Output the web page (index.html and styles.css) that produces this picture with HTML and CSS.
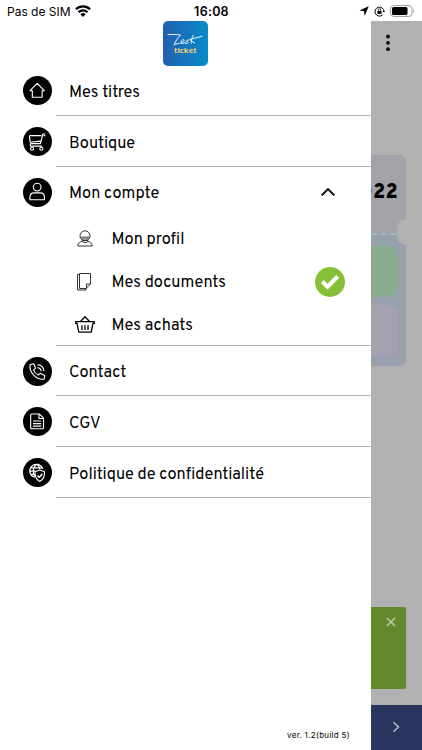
FILE: index.html
```html
<!DOCTYPE html>
<html lang="fr">
<head>
<meta charset="utf-8">
<meta name="viewport" content="width=device-width">
<title>Zest ticket</title>
<link rel="stylesheet" href="styles.css">
</head>
<body>
<header class="status">
  <div class="carrier"><span>Pas de SIM</span>
    <svg width="16" height="12" viewBox="0 0 16 12" fill="none" stroke="#000" stroke-width="2.3"><path d="M1 4.300a10 10 0 0 1 14 0M3.500 7.200a6.300 6.300 0 0 1 9 0"/><path d="M5.400 9.300a3.800 3.800 0 0 1 5.200 0L8 12z" fill="#000" stroke="none"/></svg>
  </div>
  <time>16:08</time>
  <div class="indicators">
    <svg width="10" height="10" viewBox="0 0 10 10"><path d="M9.800.2 5.600 9.700 4.900 5.100.3 4.400z"/></svg>
    <svg width="11" height="11" viewBox="0 0 11 11"><path d="M8.600 8.900A4.500 4.500 0 1 1 10 5.500" fill="none" stroke="#000"/><path d="m8.500 5 2.400 0-1 1.800zM3.500 4.900h4v3h-4z"/><path d="M4.300 5V3.800a1.200 1.200 0 0 1 2.400 0V5" fill="none" stroke="#000" stroke-width=".8"/></svg>
    <svg width="26" height="12" viewBox="0 0 26 12"><rect x=".6" y=".6" width="21.4" height="10.8" rx="3" fill="none" stroke="#999"/><rect x="2" y="2" width="15.500" height="8" rx="1.600"/><path d="M23.300 4.200c1.300.5 1.300 3.100 0 3.600z" fill="#999"/></svg>
  </div>
</header>
<div class="screen">
  <aside class="drawer">
    <div class="logo">
      <svg width="45" height="45" viewBox="0 0 45 45">
        <defs><linearGradient id="blue"><stop stop-color="#2360ae"/><stop offset="1" stop-color="#078bcb"/></linearGradient></defs>
        <rect width="45" height="45" rx="5" fill="url(#blue)"/>
        <path d="M5 13.500c4-.2 9 .1 12.500.4-3 3.200-5 6.600-6.500 10 2-1.400 3.800-1.500 5.500-1.200m1.600-1.300c2-.2 3.400-1.400 3-2.400-.7-1.200-3.200.5-3.300 2.300-.1 2 2.400 1.600 4.500 0 1.400-1 2.300-2.500 3.200-2.300-2 .2-2 1.500-1 2.200 1 .9-.4 1.800-1.900 1.300m5.800 0c-1-.3-.1-3.600 1.800-8.200m-3.400 4.300c4-1.200 8.300-2.600 12.200-3.300m-11.200 4.400 4 2.400" fill="none" stroke="#fff" stroke-width=".9" stroke-linecap="round"/>
        <text x="11" y="31.500" textLength="22.500" class="logo-word">ticket</text>
      </svg>
    </div>
    <nav>
      <a class="row"><span class="disc"><svg viewBox="0 0 28 28"><path d="m6.800 14.200 6.900-7 6.900 7H18.500v6.300H9v-6.300z"/></svg></span><span class="label">Mes titres</span></a>
      <a class="row"><span class="disc"><svg viewBox="0 0 28 28"><path d="M21.500 6.800h-2.300L16.800 16H7.700M6.200 8.300h11.500M6.200 8.300l.7 6.400 10-1M7.700 16c-1.200.5-.8 2.400.5 2.400h10.300M21.500 8.300h-1.700"/><circle cx="8.700" cy="21" r="1.500"/><circle cx="17.700" cy="21" r="1.500"/></svg></span><span class="label">Boutique</span></a>
      <a class="row row-open"><span class="disc"><svg viewBox="0 0 28 28"><circle cx="13.700" cy="8.800" r="3.700"/><path d="M6.700 21v-2.300c0-2.600 1.600-4.400 4-4.400h6c2.400 0 4 1.800 4 4.400V21z"/></svg></span><span class="label">Mon compte</span>
        <svg class="chevron" width="16" height="10" viewBox="0 0 16 10"><path d="m1.700 8.300 6.300-6.300 6.300 6.300" fill="none" stroke="#000" stroke-width="1.900"/></svg></a>
      <div class="sub">
        <a class="subrow"><svg class="thin" width="20" height="20" viewBox="0 0 20 20"><circle cx="10" cy="6.800" r="5"/><path d="M5.500 8.200h9M6.500 10h7M6.800 11.500h6.400M2.800 17c.2-2.800 2-4 4.200-4.700 1.500 1.800 4.500 1.800 6 0 2.200.7 4 1.900 4.200 4.700z"/></svg><span class="label">Mon profil</span></a>
        <a class="subrow"><svg class="thin" width="20" height="20" viewBox="0 0 20 20"><path d="M4.500 1.500H15.500V12l-4.500 4.500H4.500zM11.500 16.500V12h4M4.500 2.500h-2v15.500h8.500v-2"/></svg><span class="label">Mes documents</span>
          <svg class="check" width="30" height="30" viewBox="0 0 30 30"><circle cx="15" cy="15" r="15" fill="#87bf39"/><path d="m7.300 14.500 5.200 5.200L22.700 9.500" fill="none" stroke="#fff" stroke-width="4.200"/></svg></a>
        <a class="subrow"><svg class="basket" width="20" height="20" viewBox="0 0 20 20"><path d="M.8 6.700h18.400v1.600h-1.200L16.200 17.200H3.800L2 8.300H.8zM5.500 6.500 10 1.700l4.500 4.800M7 10.200V15m3-4.800V15m3-4.800V15"/></svg><span class="label">Mes achats</span></a>
      </div>
      <a class="row row-short"><span class="disc"><svg viewBox="0 0 28 28"><path d="M7 7.200 10.400 6.500 12.100 10.700 10.200 12.700c.8 2.200 2.400 3.900 4.600 4.700l2-1.600 4.200 2.200-.5 3.300c-3.400.6-7.500-1.100-10.200-3.900S6.200 10.500 7 7.200zM14 10.200c2 .2 3.300 1.500 3.600 3.600M14 7.300c3.800.4 6 2.700 6.300 6.500"/></svg></span><span class="label">Contact</span></a>
      <a class="row"><span class="disc"><svg viewBox="0 0 28 28"><path d="M8.600 6.800h7.300l3.900 4V20q0 1-1 1H8.600q-1.200 0-1.200-1V7.800q0-1 1.200-1zM15.400 6.800v4.300h4.400M9.600 13.500h8m-8 2.500h8m-8 2.500h8"/></svg></span><span class="label">CGV</span></a>
      <a class="row"><span class="disc"><svg viewBox="0 0 28 28"><path d="M19 10.500A6.400 6.400 0 1 0 11.200 18.600M13.100 6c-4 3-4 9-1.500 12M13.100 6c2 1.300 3 3 3.200 4.800M7.700 9.500h10.500M6.700 12.700h5.500M7.700 15.800h4"/><path d="m16.200 11.600 4.500 1.600c.3 4.500-.9 7.600-4.500 9.400-3.600-1.800-4.800-4.900-4.500-9.400z" fill="#000"/><path d="m14 17 1.700 1.600 3-3.200" stroke-width="1.500"/></svg></span><span class="label">Politique de confidentialité</span></a>
    </nav>
    <footer class="version">ver. 1.2(build 5)</footer>
  </aside>
  <main class="behind">
    <svg class="more" width="6" height="18" viewBox="0 0 6 18"><circle cx="3" cy="2.500" r="1.900"/><circle cx="3" cy="8.800" r="1.900"/><circle cx="3" cy="15.200" r="1.900"/></svg>
    <section class="ticket">
      <div class="ticket-head"><span>2022</span></div>
      <div class="ticket-body"><div class="tile green"></div><div class="tile mauve"></div></div>
      <i class="notch"></i>
    </section>
    <section class="banner"><svg width="10" height="10" viewBox="0 0 10 10"><path d="m1 1 8 8m0-8L1 9" stroke="#bac7aa" stroke-width="1.600"/></svg></section>
    <div class="bottom"><svg width="8" height="12" viewBox="0 0 8 12"><path d="m1.500 1.200 5 4.800-5 4.800" fill="none" stroke="#b5b9c5" stroke-width="1.500"/></svg></div>
  </main>
</div>
</body>
</html>
```
FILE: styles.css
```css
* { box-sizing: border-box; }
body {
  margin: 0;
  width: 422px;
  height: 750px;
  overflow: hidden;
  background: #fff;
  color: #000;
  font-family: Overpass, Roboto, sans-serif;
}
svg { display: block; flex: none; }
.status {
  height: 21px;
  display: grid;
  grid-template-columns: 1fr auto 1fr;
  align-items: center;
  padding: 0 6px 0 7px;
  font: 12px/21px Inter, sans-serif;
}
.carrier { display: flex; align-items: center; gap: 4px; white-space: nowrap; }
.status time { font-weight: 600; font-size: 12.5px; letter-spacing: .25px; padding-top: 1px; }
.indicators { display: flex; align-items: center; justify-content: flex-end; gap: 5px; }
.screen { display: flex; height: 729px; }
.drawer { width: 371px; background: #fff; display: flex; flex-direction: column; }
.logo { height: 44px; padding-left: 163px; }
.logo-word { fill: #efd57d; font: 700 7.5px "Open Sans", sans-serif; }
.row {
  display: flex;
  align-items: center;
  height: 51px;
  margin-left: 56px;
  border-bottom: 1px solid #b5b5b5;
}
.row-open { height: 50px; border-bottom: 0; }
.row-short { height: 50px; }
.disc {
  width: 29px;
  height: 29px;
  margin: 1px 18px 0 -33.5px;
  border-radius: 50%;
  background: #000;
  flex: none;
}
.disc svg { width: 29px; height: 29px; fill: none; stroke: #fff; stroke-width: 1.1; stroke-linejoin: round; }
.label { padding-top: 5px; margin-left: -.5px; font-size: 16.3px; line-height: 20px; white-space: nowrap; }
.row-open .label { padding-top: 3px; }
.chevron { margin-left: auto; margin-right: 35px; }
.sub { height: 129px; margin-left: 56px; border-bottom: 1px solid #b5b5b5; }
.subrow { display: flex; align-items: center; height: 43px; padding-left: 19px; }
.subrow .label { margin-left: 16.5px; padding-top: 2px; }
.thin, .basket { fill: none; stroke: #333; stroke-width: 1; }
.basket { stroke: #000; stroke-width: 1.3; }
.check { margin-left: auto; margin-right: 26px; }
.version { margin-top: auto; padding: 0 21px 9px; text-align: right; font: 8px/11px Inter, sans-serif; letter-spacing: .3px; }
.behind { width: 51px; background: #b1b1b1; display: flex; flex-direction: column; overflow: hidden; }
.more { margin: 13px 0 0 14px; }
.ticket {
  position: relative;
  width: 35px;
  height: 211px;
  margin-top: 103px;
  border-radius: 0 7px 7px 0;
  background: #98a0ad;
  overflow: hidden;
}
.ticket-head {
  height: 80px;
  display: flex;
  justify-content: flex-end;
  padding: 25px 8px 0 0;
  background: #a1a3a8;
  border-bottom: 2px dashed #a9b6c4;
  font: 900 20px/26px Overpass, Roboto, sans-serif;
  letter-spacing: .3px;
}
.ticket-body { display: grid; gap: 8px; padding-top: 11px; }
.tile { width: 27px; height: 51px; border-radius: 0 9px 9px 0; }
.green { background: #87ac8e; }
.mauve { background: #a6a1b0; }
.notch { position: absolute; right: 0; top: 64px; width: 9px; height: 26px; border-radius: 9px 0 0 9px; background: #b1b1b1; }
.banner { width: 35px; height: 82px; margin-top: auto; border-radius: 0 2px 2px 0; background: #62892b; padding: 10px 0 0 15px; }
.bottom { height: 45px; margin-top: 16px; background: #29355e; padding: 16px 0 0 21px; }
```
